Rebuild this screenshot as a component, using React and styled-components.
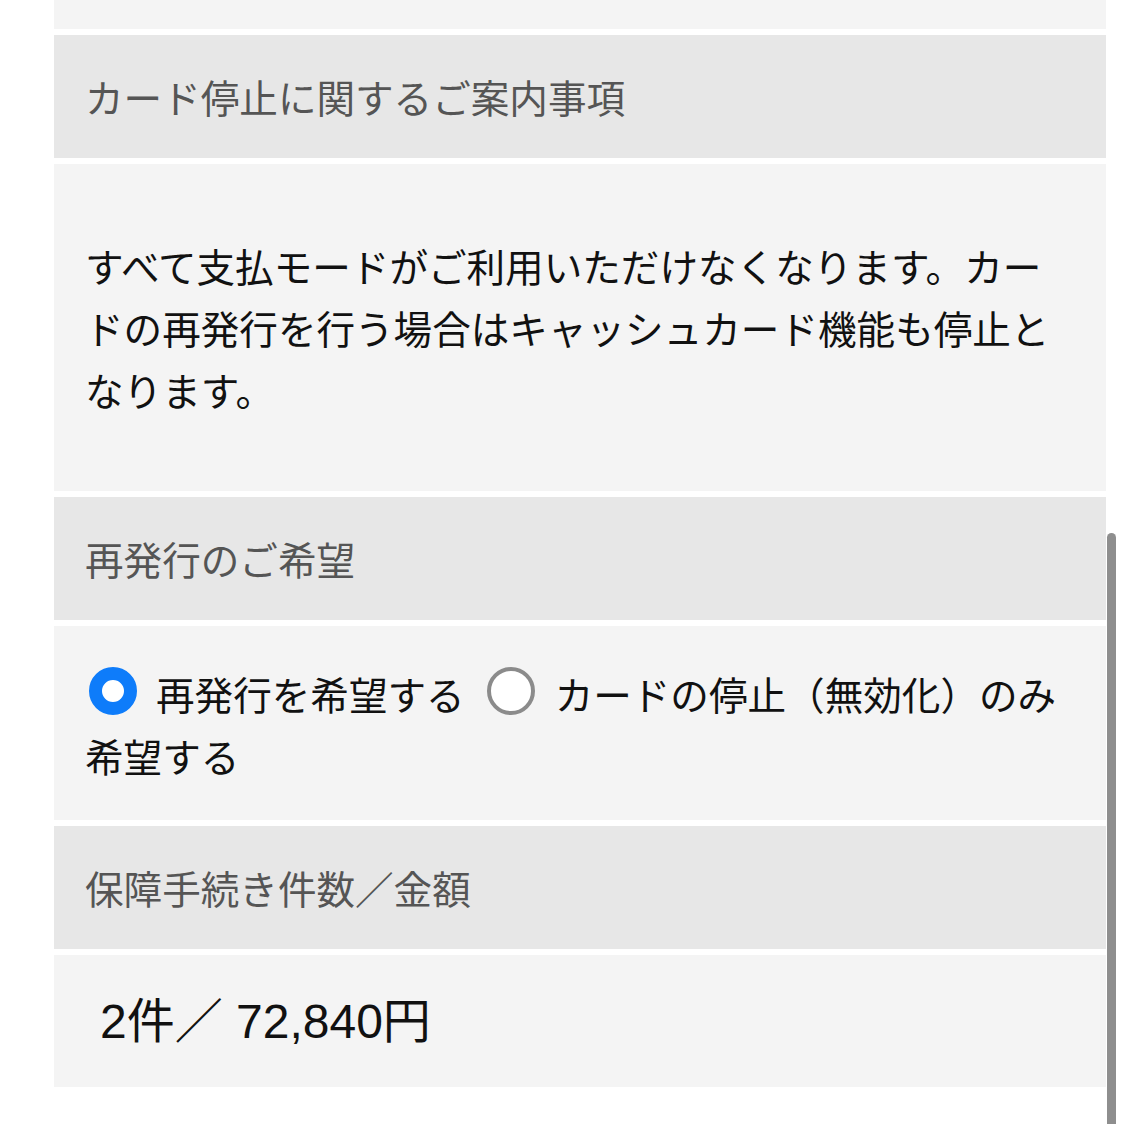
import styled, { createGlobalStyle } from 'styled-components';

const GlobalStyle = createGlobalStyle`
  html, body {
    margin: 0;
    padding: 0;
    background: #fff;
  }
  body {
    font-family: "Noto Sans CJK JP", "Noto Sans", sans-serif;
    -webkit-font-smoothing: antialiased;
  }
`;

const Page = styled.div`
  position: relative;
  min-height: 1124px;
  padding: 0 18px 0 54px;
  overflow: hidden;
`;

const Sections = styled.div`
  display: flex;
  flex-direction: column;
  gap: 6px;
`;

const Header = styled.div`
  background: #e7e7e7;
  color: #555;
  font-size: 38.6px;
  line-height: 62px;
  padding: 30px 32px 31px 31px;
`;

const Body = styled.div`
  background: #f4f4f4;
  color: #111;
  font-size: 38.6px;
  line-height: 62px;
  padding: ${(p) => p.$pad || '0 32px'};
  height: ${(p) => (p.$height ? `${p.$height}px` : 'auto')};
`;

const Value = styled.span`
  display: inline-block;
  padding-left: 14px;
  font-family: "Liberation Sans", "Noto Sans CJK JP", sans-serif;
  font-size: 48px;
  color: #111;
`;

const RadioDot = styled.span`
  display: inline-block;
  box-sizing: border-box;
  width: 48px;
  height: 48px;
  border-radius: 50%;
  background: #fff;
  border: ${(p) => (p.$checked ? '13px solid #0e7cfa' : '4px solid #8b8b8b')};
  vertical-align: -5px;
  margin: 0 ${(p) => (p.$first ? '19px' : '20px')} 0 ${(p) => (p.$first ? '4px' : '22px')};
`;

const Scrollbar = styled.div`
  position: absolute;
  right: 8px;
  top: 533px;
  width: 9px;
  height: 640px;
  border-radius: 5px 5px 0 0;
  background: #8e8e8e;
`;

export default function App() {
  return (
    <Page>
      <GlobalStyle />
      <Sections>
        <Body $height={29} />
        <Header>カード停止に関するご案内事項</Header>
        <Body $pad="70px 32px 71px 31px">
          すべて支払モードがご利用いただけなくなります。カードの再発行を行う場合はキャッシュカード機能も停止となります。
        </Body>
        <Header>再発行のご希望</Header>
        <Body $pad="36px 32px 34px 31px">
          <RadioDot $checked $first />
          再発行を希望する
          <RadioDot />
          カードの停止（無効化）のみ希望する
        </Body>
        <Header>保障手続き件数／金額</Header>
        <Body $pad="35px 32px 34px">
          <Value>2件／ 72,840円</Value>
        </Body>
      </Sections>
      <Scrollbar />
    </Page>
  );
}
